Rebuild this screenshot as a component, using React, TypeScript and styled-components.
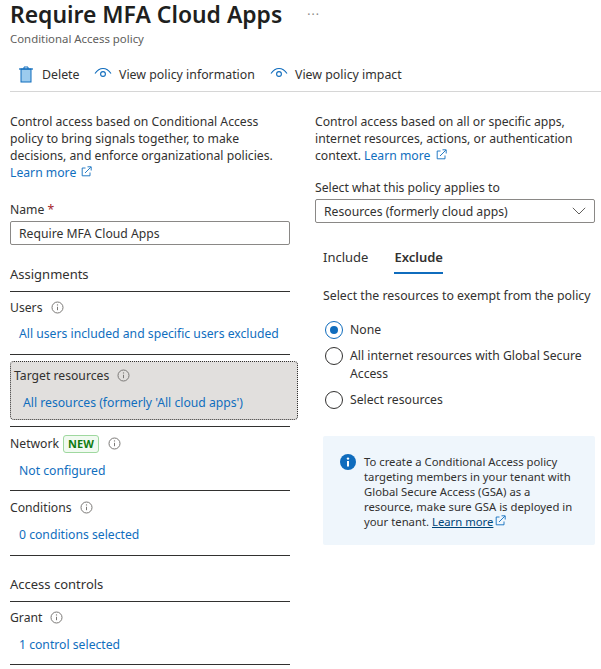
import React from 'react'
import styled, { createGlobalStyle } from 'styled-components'

const GlobalStyle = createGlobalStyle`
    html, body {
        margin: 0;
        padding: 0;
        background: #fff;
    }
    body {
        width: 601px;
        height: 669px;
        overflow: hidden;
        font-family: "Noto Sans", "Open Sans", sans-serif;
        font-size: 12.2px;
        line-height: 17px;
        color: #323130;
    }
`

const Page = styled.div`
    width: 601px;
    height: 669px;
    overflow: hidden;
    padding-left: 10px;
    box-sizing: border-box;
`

const TitleRow = styled.div`
    display: flex;
    align-items: center;
    height: 30px;
`

const Title = styled.h1`
    margin: 0;
    font-size: 22.9px;
    line-height: 30px;
    font-weight: 600;
    color: #201f1e;
`

const More = styled.span`
    margin-left: 25px;
    margin-top: -2px;
    color: #8a8886;
    font-size: 12px;
    letter-spacing: 1px;
`

const Subtitle = styled.div`
    margin-top: 1px;
    font-size: 11.4px;
    line-height: 16px;
    color: #605e5c;
`

const Toolbar = styled.div`
    display: flex;
    align-items: center;
    height: 34px;
    padding: 10px 0 0 9px;
    border-bottom: 1px solid #d6d6d6;
`

const ToolButton = styled.div<{ $gap: number; $width: number }>`
    display: flex;
    align-items: center;
    gap: ${p => p.$gap}px;
    width: ${p => p.$width}px;
    font-size: 12.35px;
    white-space: nowrap;
`

const Columns = styled.div`
    display: grid;
    grid-template-columns: 280px 280px;
    column-gap: 25px;
    padding-top: 21px;
`

const Column = styled.div`
    display: flex;
    flex-direction: column;
`

const Para = styled.p`
    margin: 0;
`

const Link = styled.a`
    color: #106ebe;
    text-decoration: none;
`

const FieldLabel = styled.div<{ $top: number }>`
    margin-top: ${p => p.$top}px;
    height: 17px;
`

const Required = styled.span`
    color: #a4262c;
`

const TextBox = styled.div`
    margin-top: 3px;
    height: 24px;
    box-sizing: border-box;
    padding: 0 8px;
    border: 1px solid #8a8886;
    border-radius: 2px;
    display: flex;
    align-items: center;
    justify-content: space-between;
`

const SectionHead = styled.div<{ $top: number }>`
    margin-top: ${p => p.$top}px;
    height: 25px;
    font-size: 13px;
    border-bottom: 1px solid #323130;
`

const Summary = styled.div<{ $height: number; $top?: number }>`
    height: ${p => p.$height}px;
    padding-top: ${p => p.$top ?? 7}px;
    box-sizing: border-box;
    border-bottom: 1px solid #323130;
`

const SummaryTitle = styled.div`
    display: flex;
    align-items: center;
    height: 17px;
`

const SummaryLink = styled(Link)<{ $gap?: number }>`
    display: block;
    margin: ${p => p.$gap ?? 9}px 0 0 9px;
`

const ActiveSummary = styled.div`
    margin: 6px 0 6px 0;
    width: 288px;
    box-sizing: border-box;
    height: 59px;
    padding: 5px 3px 0;
    background: #e1dfdd;
    border: 1px dotted #323130;
    border-radius: 4px;
`

const ActiveRule = styled.div`
    border-bottom: 1px solid #323130;
`

const InfoIcon = styled.svg<{ $left: number }>`
    margin-left: ${p => p.$left}px;
    flex: none;
`

const NewBadge = styled.span`
    margin-left: 4px;
    padding: 0 4px;
    height: 18px;
    box-sizing: border-box;
    display: inline-flex;
    align-items: center;
    font-size: 11px;
    font-weight: 700;
    color: #107c10;
    background: #f1faf1;
    border: 1px solid #9fd89f;
    border-radius: 3px;
`

const Tabs = styled.div`
    display: flex;
    gap: 26px;
    margin: 26px 0 0 8px;
`

const Tab = styled.div<{ $active?: boolean }>`
    height: 23px;
    font-size: 13px;
    font-weight: ${p => (p.$active ? 600 : 400)};
    border-bottom: 2px solid ${p => (p.$active ? '#0f6cbd' : 'transparent')};
`

const Indented = styled.div`
    margin: 13px 0 0 8px;
    font-size: 12.3px;
`

const RadioGroup = styled.div`
    display: flex;
    flex-direction: column;
    gap: 8px;
    margin: 17px 0 0 10px;
`

const RadioRow = styled.div`
    display: flex;
    gap: 7px;
    line-height: 18px;
`

const RadioMark = styled.span<{ $checked?: boolean }>`
    flex: none;
    width: 18px;
    height: 18px;
    box-sizing: border-box;
    border-radius: 50%;
    border: 1px solid ${p => (p.$checked ? '#0f6cbd' : '#323130')};
    display: flex;
    align-items: center;
    justify-content: center;
    &::after {
        content: '';
        width: 8px;
        height: 8px;
        border-radius: 50%;
        background: ${p => (p.$checked ? '#0f6cbd' : 'transparent')};
    }
`

const InfoBox = styled.div`
    display: flex;
    gap: 8px;
    margin: 27px 0 0 8px;
    height: 109px;
    box-sizing: border-box;
    padding: 18px 17px 0 17px;
    background: #eff6fc;
    border-radius: 2px;
    font-size: 11.3px;
    line-height: 15px;
`

const InfoLink = styled.a`
    color: #004578;
    text-decoration: underline;
`

const ExternalIcon = ({ color = '#106ebe' }: { color?: string }) => (
    <svg width="11" height="11" viewBox="0 0 11 11" fill="none" stroke={color} strokeWidth="0.9" style={{ marginLeft: 2 }}>
        <path d="M4.5 2H1.2v7.8H9V6.5" />
        <path d="M4 7l5.8-5.8M6.5 .8h3.7v3.7" />
    </svg>
)

const Info = ({ left }: { left: number }) => (
    <InfoIcon $left={left} width="13" height="13" viewBox="0 0 13 13" fill="none">
        <circle cx="6.5" cy="6.5" r="5.5" stroke="#7a7876" />
        <path d="M6.5 5.8v3.4" stroke="#7a7876" />
        <circle cx="6.5" cy="3.9" r="0.7" fill="#7a7876" />
    </InfoIcon>
)

const Eye = () => (
    <svg width="18" height="14" viewBox="0 0 18 14" fill="none" stroke="#0f6cbd" strokeWidth="1.1">
        <path d="M1 6.5C3.5 2.8 6 1.5 9 1.5s5.5 1.3 8 5" />
        <circle cx="9" cy="7" r="2.4" />
    </svg>
)

const Trash = () => (
    <svg width="14" height="17" viewBox="0 0 14 17">
        <rect x="2" y="3" width="10" height="13" fill="#9ccbee" stroke="#0f6cbd" />
        <path d="M0 3h14" stroke="#0f6cbd" strokeWidth="1.2" />
        <path d="M5 3V1h4v2" fill="none" stroke="#0f6cbd" />
    </svg>
)

const Chevron = () => (
    <svg width="14" height="8" viewBox="0 0 14 8" fill="none" stroke="#605e5c">
        <path d="M.8 .8L7 7l6.2-6.2" />
    </svg>
)

const App = () => {
    return (
        <Page>
            <GlobalStyle />
            <TitleRow>
                <Title>Require MFA Cloud Apps</Title>
                <More>···</More>
            </TitleRow>
            <Subtitle>Conditional Access policy</Subtitle>
            <Toolbar>
                <ToolButton $gap={9} $width={75}><Trash />Delete</ToolButton>
                <ToolButton $gap={7} $width={176}><Eye />View policy information</ToolButton>
                <ToolButton $gap={7} $width={140}><Eye />View policy impact</ToolButton>
            </Toolbar>
            <Columns>
                <Column>
                    <Para>
                        Control access based on Conditional Access policy to bring signals together, to make decisions, and enforce organizational policies.{' '}
                        <Link href="#">Learn more <ExternalIcon /></Link>
                    </Para>
                    <FieldLabel $top={20}>Name <Required>*</Required></FieldLabel>
                    <TextBox>Require MFA Cloud Apps</TextBox>
                    <SectionHead $top={21}>Assignments</SectionHead>
                    <Summary $height={63}>
                        <SummaryTitle>Users<Info left={8} /></SummaryTitle>
                        <SummaryLink href="#">All users included and specific users excluded</SummaryLink>
                    </Summary>
                    <ActiveRule>
                        <ActiveSummary>
                            <SummaryTitle>Target resources<Info left={8} /></SummaryTitle>
                            <SummaryLink href="#" $gap={10}>All resources (formerly 'All cloud apps')</SummaryLink>
                        </ActiveSummary>
                    </ActiveRule>
                    <Summary $height={64} $top={8}>
                        <SummaryTitle>Network<NewBadge>NEW</NewBadge><Info left={9} /></SummaryTitle>
                        <SummaryLink href="#" $gap={10}>Not configured</SummaryLink>
                    </Summary>
                    <Summary $height={65} $top={8}>
                        <SummaryTitle>Conditions<Info left={8} /></SummaryTitle>
                        <SummaryLink href="#" $gap={10}>0 conditions selected</SummaryLink>
                    </Summary>
                    <SectionHead $top={20}>Access controls</SectionHead>
                    <Summary $height={63}>
                        <SummaryTitle>Grant<Info left={8} /></SummaryTitle>
                        <SummaryLink href="#" $gap={10}>1 control selected</SummaryLink>
                    </Summary>
                </Column>
                <Column>
                    <Para>
                        Control access based on all or specific apps, internet resources, actions, or authentication context.{' '}
                        <Link href="#">Learn more <ExternalIcon /></Link>
                    </Para>
                    <FieldLabel $top={15}>Select what this policy applies to</FieldLabel>
                    <TextBox>Resources (formerly cloud apps)<Chevron /></TextBox>
                    <Tabs>
                        <Tab>Include</Tab>
                        <Tab $active>Exclude</Tab>
                    </Tabs>
                    <Indented>Select the resources to exempt from the policy</Indented>
                    <RadioGroup>
                        <RadioRow><RadioMark $checked />None</RadioRow>
                        <RadioRow><RadioMark /><span>All internet resources with Global Secure Access</span></RadioRow>
                        <RadioRow><RadioMark />Select resources</RadioRow>
                    </RadioGroup>
                    <InfoBox>
                        <svg width="16" height="16" viewBox="0 0 16 16" style={{ flex: 'none' }}>
                            <circle cx="8" cy="8" r="8" fill="#0f6cbd" />
                            <rect x="7" y="7" width="2" height="5.5" fill="#fff" />
                            <circle cx="8" cy="4.6" r="1.2" fill="#fff" />
                        </svg>
                        <div>
                            To create a Conditional Access policy targeting members in your tenant with Global Secure Access (GSA) as a resource, make sure GSA is deployed in your tenant.{' '}
                            <InfoLink href="#">Learn more</InfoLink><ExternalIcon />
                        </div>
                    </InfoBox>
                </Column>
            </Columns>
        </Page>
    )
}

export default App
